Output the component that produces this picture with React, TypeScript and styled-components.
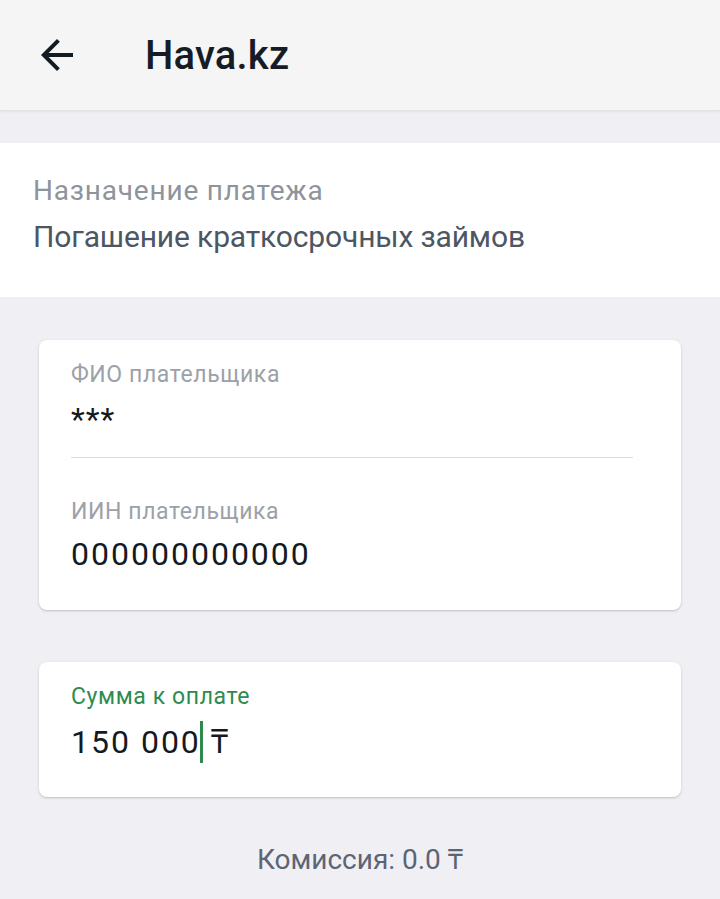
import React from "react";
import styled, { createGlobalStyle } from "styled-components";

const Global = createGlobalStyle`
  html, body { margin: 0; padding: 0; background: #efeff4; }
  body { font-family: Roboto, "Noto Sans", "Liberation Sans", sans-serif; -webkit-font-smoothing: antialiased; }
  * { box-sizing: border-box; }
`;

const Page = styled.div`
  min-height: 899px;
  background: #efeff4;
  display: flex;
  flex-direction: column;
`;

const Header = styled.header`
  height: 111px;
  background: #f5f5f5;
  border-bottom: 1px solid #e2e2e6;
  box-shadow: 0 1px 2px rgba(0, 0, 0, 0.06);
  display: flex;
  align-items: center;
  padding-left: 33px;
  gap: 64px;
`;

const IconButton = styled.button`
  width: 48px;
  height: 48px;
  padding: 0;
  border: 0;
  background: transparent;
  display: flex;
  align-items: center;
  justify-content: center;
  color: #141a22;
`;

const Title = styled.h1`
  margin: 0;
  font-size: 40px;
  font-weight: 500;
  color: #161c26;
  letter-spacing: 0.2px;
`;

const PurposeSection = styled.section`
  margin-top: 32px;
  background: #ffffff;
  height: 154px;
  padding: 32px 33px 0;
  display: flex;
  flex-direction: column;
  gap: 13px;
`;

const PurposeLabel = styled.div`
  font-size: 28px;
  line-height: 32px;
  letter-spacing: 0.8px;
  color: #8e949c;
`;

const PurposeValue = styled.div`
  font-size: 30px;
  line-height: 34px;
  letter-spacing: -0.15px;
  color: #4d5663;
`;

const Card = styled.div<{ $height: number; $top: number }>`
  margin: ${(p) => p.$top}px 39px 0;
  height: ${(p) => p.$height}px;
  background: #ffffff;
  border-radius: 8px;
  box-shadow: 0 1px 3px rgba(0, 0, 0, 0.16), 0 1px 1px rgba(0, 0, 0, 0.05);
  padding: 0 48px 0 32px;
  display: flex;
  flex-direction: column;
`;

const Field = styled.div<{ $pt: number }>`
  padding-top: ${(p) => p.$pt}px;
  display: flex;
  flex-direction: column;
`;

const FieldLabel = styled.div<{ $accent?: boolean }>`
  font-size: 23px;
  line-height: 28px;
  letter-spacing: 0.6px;
  color: ${(p) => (p.$accent ? "#2e8b4f" : "#9ca1a8")};
`;

const FieldValue = styled.div<{ $mt: number }>`
  margin-top: ${(p) => p.$mt}px;
  font-size: 32px;
  line-height: 36px;
  color: #151a22;
  letter-spacing: 2px;
  display: flex;
  align-items: center;
`;

const Stars = styled.div`
  margin-top: 15px;
  font-size: 32px;
  line-height: 30px;
  color: #151a22;
  letter-spacing: 1px;
`;

const Divider = styled.div`
  margin-top: 23px;
  height: 1px;
  background: #dcdde0;
`;

const Caret = styled.span`
  display: inline-block;
  width: 3px;
  height: 42px;
  background: #2e8b4f;
  margin: 0 8px 0 -1px;
`;

const Commission = styled.div`
  margin-top: 47px;
  text-align: center;
  font-size: 28px;
  line-height: 32px;
  color: #5c6574;
`;

export default function App() {
  return (
    <>
      <Global />
      <Page>
        <Header>
          <IconButton aria-label="Назад">
            <svg width="48" height="48" viewBox="0 0 24 24" fill="currentColor">
              <path d="M20 11H7.83l5.59-5.59L12 4l-8 8 8 8 1.41-1.41L7.83 13H20v-2z" />
            </svg>
          </IconButton>
          <Title>Hava.kz</Title>
        </Header>

        <PurposeSection>
          <PurposeLabel>Назначение платежа</PurposeLabel>
          <PurposeValue>Погашение краткосрочных займов</PurposeValue>
        </PurposeSection>

        <Card $top={43} $height={270}>
          <Field $pt={21}>
            <FieldLabel>ФИО плательщика</FieldLabel>
            <Stars>***</Stars>
          </Field>
          <Divider />
          <Field $pt={40}>
            <FieldLabel>ИИН плательщика</FieldLabel>
            <FieldValue $mt={10}>000000000000</FieldValue>
          </Field>
        </Card>

        <Card $top={52} $height={135}>
          <Field $pt={21}>
            <FieldLabel $accent>Сумма к оплате</FieldLabel>
            <FieldValue $mt={10}>
              150 000
              <Caret />₸
            </FieldValue>
          </Field>
        </Card>

        <Commission>Комиссия: 0.0 ₸</Commission>
      </Page>
    </>
  );
}
